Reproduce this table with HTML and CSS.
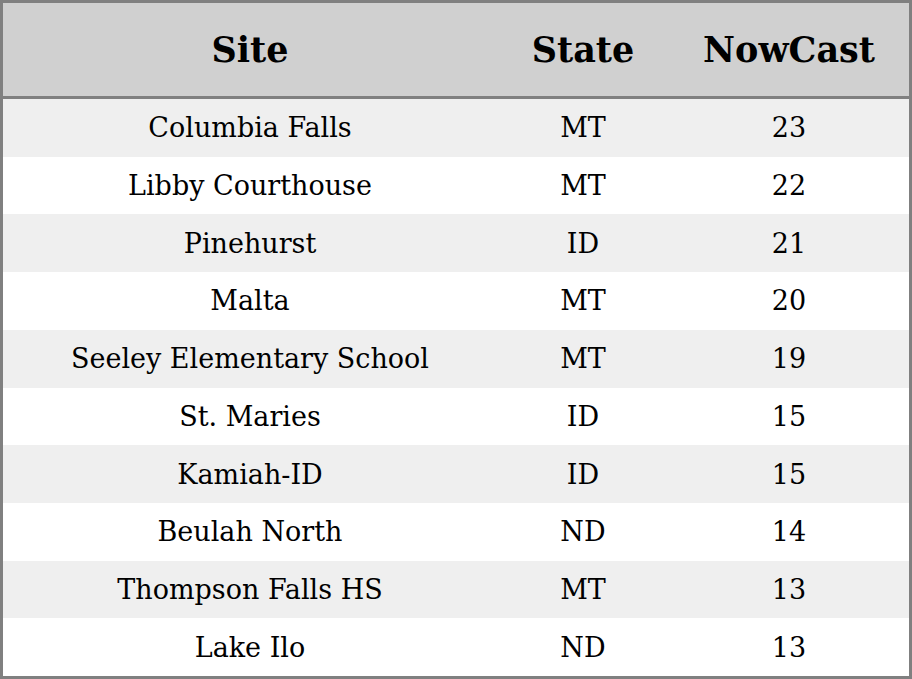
FILE: index.html
```html
<!DOCTYPE html>
<html>
<head>
<meta charset="utf-8">
<link rel="stylesheet" href="styles.css">
</head>
<body>
<div class="table">
  <div class="head">
    <div class="cell">Site</div>
    <div class="cell">State</div>
    <div class="cell">NowCast</div>
  </div>
  <div class="body">
    <div class="row"><div class="cell">Columbia Falls</div><div class="cell">MT</div><div class="cell">23</div></div>
    <div class="row"><div class="cell">Libby Courthouse</div><div class="cell">MT</div><div class="cell">22</div></div>
    <div class="row"><div class="cell">Pinehurst</div><div class="cell">ID</div><div class="cell">21</div></div>
    <div class="row"><div class="cell">Malta</div><div class="cell">MT</div><div class="cell">20</div></div>
    <div class="row"><div class="cell">Seeley Elementary School</div><div class="cell">MT</div><div class="cell">19</div></div>
    <div class="row"><div class="cell">St. Maries</div><div class="cell">ID</div><div class="cell">15</div></div>
    <div class="row"><div class="cell">Kamiah-ID</div><div class="cell">ID</div><div class="cell">15</div></div>
    <div class="row"><div class="cell">Beulah North</div><div class="cell">ND</div><div class="cell">14</div></div>
    <div class="row"><div class="cell">Thompson Falls HS</div><div class="cell">MT</div><div class="cell">13</div></div>
    <div class="row"><div class="cell">Lake Ilo</div><div class="cell">ND</div><div class="cell">13</div></div>
  </div>
</div>
</body>
</html>
```
FILE: styles.css
```css
html, body {
  margin: 0;
  padding: 0;
  background: #ffffff;
}
.table {
  box-sizing: border-box;
  width: 912px;
  height: 679px;
  border: 3px solid #808080;
  display: flex;
  flex-direction: column;
  font-family: "DejaVu Serif", serif;
  color: #000;
}
.head, .row {
  display: grid;
  grid-template-columns: 494px 172px 240px;
  align-items: center;
  text-align: center;
}
.head {
  height: 93px;
  flex: none;
  background: #d0d0d0;
  border-bottom: 3px solid #808080;
  font-weight: bold;
  font-size: 35px;
}
.body {
  flex: 1;
  display: grid;
  grid-template-rows: repeat(10, 1fr);
}
.row {
  font-size: 27px;
  background: #ffffff;
}
.row:nth-child(odd) {
  background: #efefef;
}
```
